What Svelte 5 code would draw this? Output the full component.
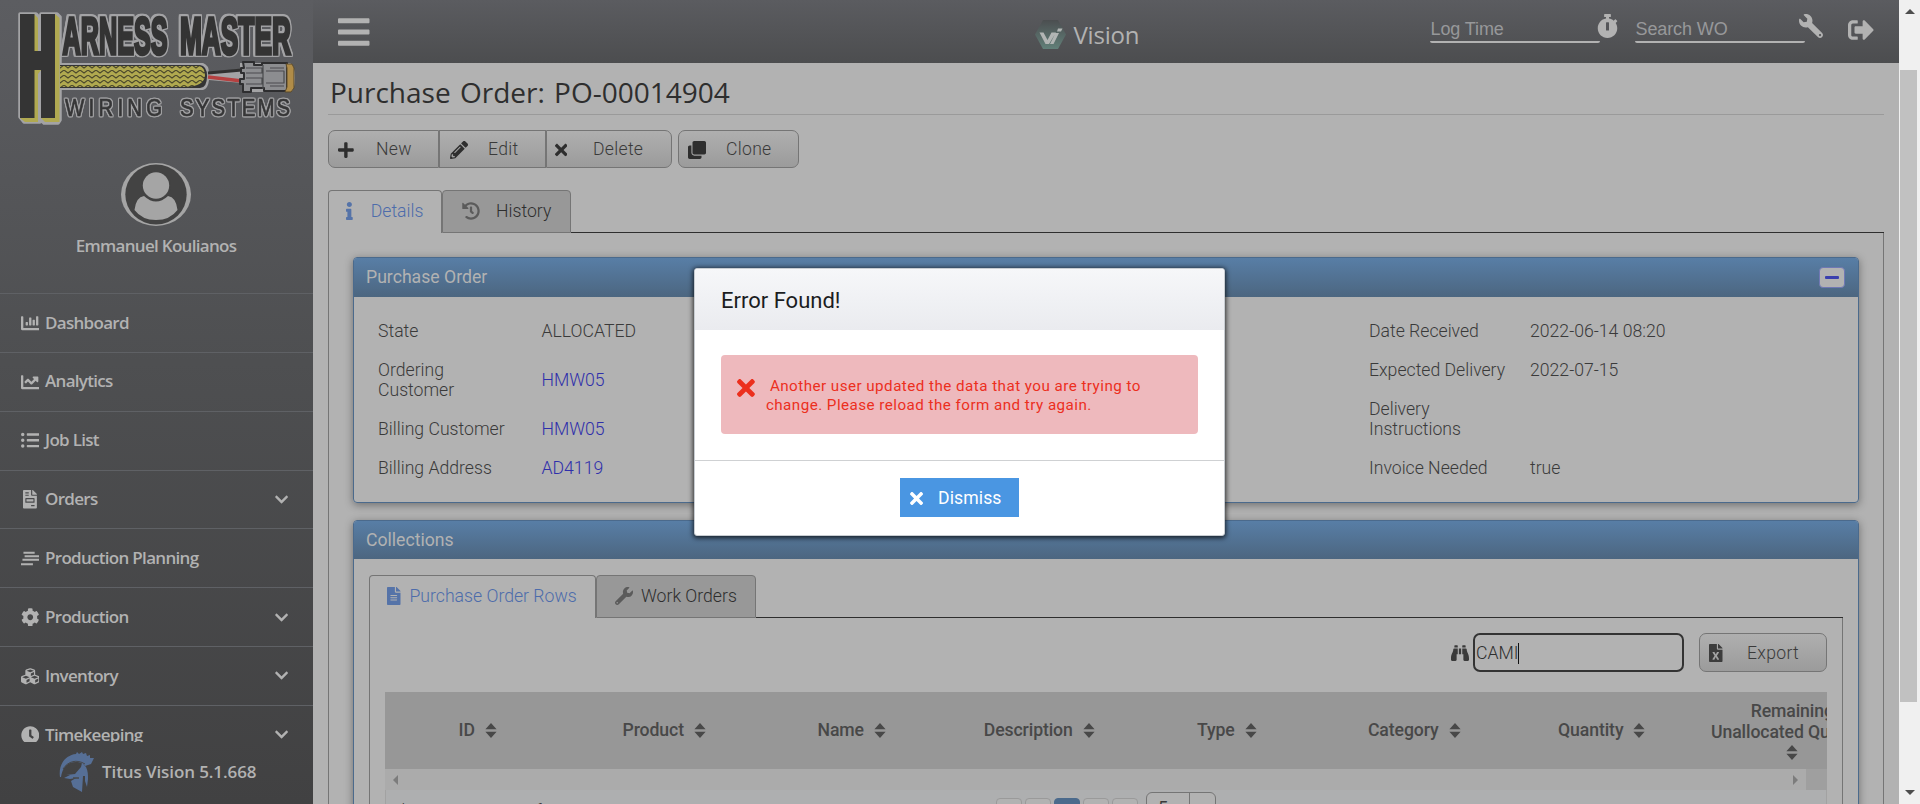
<script>
  const icons = {
    bars: [448, 'M16 132h416c8.8 0 16-7.2 16-16V76c0-8.800-7.200-16-16-16H16C7.200 60 0 67.200 0 76v40c0 8.800 7.200 16 16 16zm0 160h416c8.800 0 16-7.200 16-16v-40c0-8.800-7.200-16-16-16H16c-8.800 0-16 7.200-16 16v40c0 8.800 7.200 16 16 16zm0 160h416c8.800 0 16-7.200 16-16v-40c0-8.800-7.200-16-16-16H16c-8.800 0-16 7.200-16 16v40c0 8.800 7.200 16 16 16z'],
    chartBar: [512, 'M332.8 320h38.4c6.400 0 12.800-6.400 12.800-12.800V172.800c0-6.400-6.400-12.800-12.800-12.800h-38.400c-6.400 0-12.800 6.400-12.800 12.800v134.400c0 6.400 6.400 12.800 12.800 12.800zm96 0h38.400c6.400 0 12.800-6.400 12.800-12.800V76.800c0-6.400-6.400-12.800-12.800-12.800h-38.400c-6.400 0-12.800 6.400-12.800 12.800v230.400c0 6.400 6.400 12.800 12.800 12.800zm-288 0h38.400c6.400 0 12.800-6.400 12.800-12.800v-70.400c0-6.400-6.400-12.800-12.800-12.800h-38.400c-6.400 0-12.800 6.400-12.800 12.800v70.400c0 6.400 6.400 12.800 12.800 12.800zm96 0h38.400c6.400 0 12.800-6.400 12.800-12.800V108.800c0-6.400-6.400-12.800-12.800-12.800h-38.400c-6.400 0-12.800 6.400-12.800 12.800v198.400c0 6.400 6.400 12.800 12.800 12.800zM496 384H64V80c0-8.840-7.160-16-16-16H16C7.160 64 0 71.160 0 80v336c0 17.670 14.330 32 32 32h464c8.840 0 16-7.160 16-16v-32c0-8.840-7.160-16-16-16z'],
    chartLine: [512, 'M496 384H64V80c0-8.840-7.160-16-16-16H16C7.160 64 0 71.160 0 80v336c0 17.670 14.330 32 32 32h464c8.840 0 16-7.160 16-16v-32c0-8.840-7.160-16-16-16zM464 96H345.940c-21.380 0-32.090 25.850-16.970 40.970l32.400 32.400L288 242.750l-73.370-73.370c-12.500-12.500-32.760-12.500-45.250 0l-68.690 68.690c-6.250 6.250-6.250 16.380 0 22.630l22.620 22.620c6.250 6.250 16.380 6.250 22.630 0L192 237.250l73.370 73.370c12.500 12.500 32.760 12.500 45.250 0l96-96 32.400 32.400c15.120 15.120 40.970 4.410 40.970-16.970V112c.010-8.840-7.150-16-15.990-16z'],
    list: [512, 'M48 48a48 48 0 1 0 0 96 48 48 0 0 0 0-96zm0 160a48 48 0 1 0 0 96 48 48 0 0 0 0-96zm0 160a48 48 0 1 0 0 96 48 48 0 0 0 0-96zM176 64h320c9 0 16 7 16 16v32c0 9-7 16-16 16H176c-9 0-16-7-16-16V80c0-9 7-16 16-16zm0 160h320c9 0 16 7 16 16v32c0 9-7 16-16 16H176c-9 0-16-7-16-16v-32c0-9 7-16 16-16zm0 160h320c9 0 16 7 16 16v32c0 9-7 16-16 16H176c-9 0-16-7-16-16v-32c0-9 7-16 16-16z'],
    invoice: [384, 'M288 256H96v64h192v-64zm89-151L279.100 7c-4.500-4.500-10.600-7-17-7H256v128h128v-6.100c0-6.300-2.500-12.400-7-16.900zm-153 31V0H24C10.700 0 0 10.700 0 24v464c0 13.300 10.700 24 24 24h336c13.300 0 24-10.700 24-24V160H248c-13.200 0-24-10.800-24-24zM64 72c0-4.420 3.580-8 8-8h80c4.420 0 8 3.580 8 8v16c0 4.420-3.580 8-8 8H72c-4.420 0-8-3.580-8-8V72zm0 64c0-4.420 3.580-8 8-8h80c4.420 0 8 3.580 8 8v16c0 4.420-3.580 8-8 8H72c-4.420 0-8-3.580-8-8v-16zm256 304c0 4.420-3.580 8-8 8h-80c-4.420 0-8-3.580-8-8v-16c0-4.420 3.580-8 8-8h80c4.420 0 8 3.580 8 8v16zm0-200v96c0 8.840-7.160 16-16 16H80c-8.840 0-16-7.160-16-16v-96c0-8.840 7.160-16 16-16h224c8.840 0 16 7.160 16 16z'],
    planning: [512, 'M68 76h310v56H68zM100 172h400v56H100zM40 268h472v56H40zM0 392h330v56H0z'],
    cog: [512, 'M487.400 315.700l-42.600-24.600c4.300-23.200 4.300-47 0-70.200l42.600-24.600c4.900-2.800 7.100-8.600 5.500-14-11.100-35.600-30-67.800-54.700-94.600-3.800-4.100-10-5.100-14.800-2.300L380.800 110c-17.900-15.400-38.500-27.300-60.800-35.100V25.800c0-5.600-3.900-10.500-9.400-11.700-36.700-8.200-74.300-7.800-109.200 0-5.500 1.200-9.400 6.100-9.400 11.700V75c-22.200 7.900-42.800 19.800-60.800 35.100L88.700 85.500c-4.900-2.800-11-1.900-14.800 2.300-24.700 26.700-43.600 58.900-54.700 94.600-1.700 5.400.6 11.200 5.500 14L67.300 221c-4.300 23.200-4.300 47 0 70.200l-42.600 24.600c-4.900 2.800-7.100 8.600-5.500 14 11.100 35.600 30 67.800 54.700 94.600 3.800 4.100 10 5.100 14.800 2.300l42.600-24.600c17.900 15.400 38.500 27.300 60.800 35.100v49.200c0 5.600 3.900 10.500 9.400 11.700 36.700 8.200 74.300 7.800 109.200 0 5.500-1.200 9.400-6.100 9.400-11.700v-49.200c22.200-7.900 42.800-19.800 60.800-35.100l42.600 24.600c4.900 2.800 11 1.900 14.800-2.300 24.700-26.700 43.600-58.900 54.700-94.600 1.500-5.500-.7-11.300-5.600-14.100zM256 336c-44.100 0-80-35.900-80-80s35.900-80 80-80 80 35.900 80 80-35.900 80-80 80z'],
    cubes: [512, 'M488.600 250.200L392 214V105.500c0-15-9.300-28.400-23.400-33.700l-100-37.500c-8.100-3.100-17.100-3.100-25.300 0l-100 37.500c-14.100 5.300-23.400 18.700-23.400 33.700V214l-96.600 36.200C9.300 255.500 0 268.900 0 283.900V394c0 13.600 7.700 26.100 19.900 32.200l100 50c10.100 5.100 22.100 5.100 32.200 0l103.900-52 103.900 52c10.100 5.100 22.100 5.100 32.200 0l100-50c12.200-6.100 19.900-18.600 19.900-32.200V283.900c0-15-9.300-28.400-23.400-33.700zM358 214.800l-85 31.900v-68.200l85-37v73.300zM154 104.100l102-38.200 102 38.200v.6l-102 41.400-102-41.400v-.6zm84 291.100l-85 42.500v-79.100l85-38.800v75.400zm0-112l-102 41.400-102-41.400v-.6l102-38.200 102 38.200v.6zm240 112l-85 42.500v-79.100l85-38.800v75.400zm0-112l-102 41.400-102-41.400v-.6l102-38.200 102 38.200v.6z'],
    clock: [512, 'M256 8C119 8 8 119 8 256s111 248 248 248 248-111 248-248S393 8 256 8zm92.490 313l-20 25a16 16 0 0 1-22.490 2.500l-67-49.720a40 40 0 0 1-15-31.230V112a16 16 0 0 1 16-16h32a16 16 0 0 1 16 16v144l58 42.500a16 16 0 0 1 2.490 22.500z'],
    chevron: [448, 'M207.030 381.480L12.690 187.130c-9.370-9.370-9.370-24.570 0-33.940l22.670-22.670c9.360-9.360 24.520-9.380 33.900-.04L224 284.500l154.750-154.020c9.380-9.340 24.540-9.320 33.900.04l22.670 22.670c9.370 9.370 9.370 24.570 0 33.940L240.970 381.480c-9.370 9.370-24.570 9.370-33.940 0z'],
    plus: [448, 'M416 208H272V64c0-17.670-14.330-32-32-32h-32c-17.670 0-32 14.330-32 32v144H32c-17.670 0-32 14.330-32 32v32c0 17.670 14.330 32 32 32h144v144c0 17.670 14.330 32 32 32h32c17.670 0 32-14.330 32-32V304h144c17.670 0 32-14.330 32-32v-32c0-17.670-14.330-32-32-32z'],
    pencil: [512, 'M497.900 142.100l-46.100 46.100c-4.700 4.700-12.300 4.700-17 0l-111-111c-4.700-4.700-4.700-12.300 0-17l46.100-46.100c18.700-18.700 49.100-18.700 67.900 0l60.100 60.100c18.800 18.700 18.800 49.100 0 67.900zM284.200 99.800L21.600 362.400.4 483.900c-2.900 16.400 11.400 30.600 27.800 27.800l121.500-21.300 262.600-262.600c4.700-4.700 4.700-12.300 0-17l-111-111c-4.800-4.700-12.400-4.700-17.100 0zM124.100 339.900c-5.500-5.500-5.500-14.300 0-19.800l154-154c5.500-5.500 14.300-5.500 19.800 0s5.500 14.300 0 19.800l-154 154c-5.500 5.500-14.300 5.500-19.800 0zM88 424h48v36.300l-64.500 11.300-31.100-31.100L51.700 376H88v48z'],
    times: [352, 'M242.720 256l100.070-100.070c12.280-12.280 12.280-32.190 0-44.480l-22.240-22.240c-12.280-12.280-32.190-12.280-44.480 0L176 189.280 75.930 89.210c-12.280-12.280-32.190-12.280-44.480 0L9.210 111.450c-12.280 12.280-12.280 32.190 0 44.480L109.280 256 9.210 356.070c-12.280 12.280-12.280 32.190 0 44.480l22.240 22.240c12.280 12.280 32.200 12.280 44.480 0L176 322.720l100.070 100.070c12.280 12.280 32.200 12.280 44.480 0l22.240-22.240c12.280-12.280 12.280-32.190 0-44.480L242.720 256z'],
    clone: [512, 'M464 0c26.500 0 48 21.500 48 48v288c0 26.500-21.500 48-48 48H176c-26.500 0-48-21.500-48-48V48c0-26.500 21.500-48 48-48h288M176 416c-44.100 0-80-35.900-80-80V128H48c-26.500 0-48 21.500-48 48v288c0 26.500 21.500 48 48 48h288c26.500 0 48-21.500 48-48v-48H176z'],
    info: [192, 'M20 424.230h20V279.770H20c-11 0-20-9-20-20V212c0-11 9-20 20-20h112c11 0 20 9 20 20v212.230h20c11 0 20 9 20 20V492c0 11-9 20-20 20H20c-11 0-20-9-20-20v-47.770c0-11 9-20 20-20zM96 0C56.200 0 24 32.200 24 72s32.200 72 72 72 72-32.200 72-72S135.800 0 96 0z'],
    history: [512, 'M504 255.530c.250 136.640-111.180 248.370-247.820 248.470-59.010.040-113.220-20.530-155.820-54.910-11.080-8.940-11.910-25.540-1.840-35.610l11.270-11.270c8.610-8.610 22.350-9.550 31.890-1.980C173.060 425.140 212.780 440 256 440c101.700 0 184-82.310 184-184 0-101.700-82.310-184-184-184-48.810 0-93.150 18.970-126.070 49.930l50.750 50.750c10.080 10.080 2.940 27.310-11.310 27.310H24c-8.840 0-16-7.160-16-16V38.630c0-14.250 17.230-21.390 27.310-11.310l49.370 49.370C129.210 34.140 189.550 8 256 8c136.810 0 247.750 110.780 248 247.530zm-180.910 78.790l9.820-12.630c8.140-10.460 6.250-25.540-4.210-33.680L288 256.350V152c0-13.250-10.750-24-24-24h-16c-13.250 0-24 10.750-24 24v135.650l65.410 50.870c10.460 8.140 25.540 6.260 33.680-4.200z'],
    fileAlt: [384, 'M224 136V0H24C10.700 0 0 10.700 0 24v464c0 13.300 10.700 24 24 24h336c13.300 0 24-10.700 24-24V160H248c-13.200 0-24-10.800-24-24zm64 236c0 6.600-5.400 12-12 12H108c-6.600 0-12-5.400-12-12v-8c0-6.600 5.400-12 12-12h168c6.600 0 12 5.400 12 12v8zm0-64c0 6.600-5.400 12-12 12H108c-6.600 0-12-5.400-12-12v-8c0-6.600 5.400-12 12-12h168c6.600 0 12 5.400 12 12v8zm0-72v8c0 6.600-5.400 12-12 12H108c-6.600 0-12-5.400-12-12v-8c0-6.600 5.400-12 12-12h168c6.600 0 12 5.400 12 12zm96-114.100v6.100H256V0h6.100c6.400 0 12.500 2.500 17 7l97.900 98c4.500 4.500 7 10.600 7 16.900z'],
    wrench: [512, 'M507.730 109.100c-2.240-9.030-13.540-12.090-20.120-5.510l-74.360 74.360-67.880-11.310-11.310-67.880 74.360-74.360c6.620-6.620 3.430-17.900-5.660-20.160-47.380-11.740-99.550.910-136.580 37.930-39.640 39.640-50.550 97.100-34.050 147.200L18.740 402.760c-24.990 24.990-24.990 65.510 0 90.500 24.990 24.990 65.510 24.990 90.500 0l213.210-213.210c50.120 16.710 107.470 5.680 147.370-34.220 37.070-37.070 49.700-89.320 37.910-136.730zM64 472c-13.250 0-24-10.750-24-24 0-13.260 10.750-24 24-24s24 10.740 24 24c0 13.250-10.750 24-24 24z'],
    stopwatch: [448, 'M432 304c0 114.900-93.100 208-208 208S16 418.900 16 304c0-104 76.300-190.200 176-205.500V64h-28c-6.600 0-12-5.400-12-12V12c0-6.600 5.400-12 12-12h120c6.600 0 12 5.400 12 12v40c0 6.600-5.400 12-12 12h-28v34.500c37.500 5.800 71.700 21.600 99.700 44.600l27.500-27.500c4.700-4.700 12.300-4.700 17 0l28.300 28.300c4.700 4.700 4.700 12.300 0 17l-29.400 29.400-.6.6C419.700 223.300 432 262.200 432 304zm-176 36V188.500c0-6.600-5.400-12-12-12h-40c-6.600 0-12 5.400-12 12V340c0 6.600 5.400 12 12 12h40c6.600 0 12-5.400 12-12z'],
    signOut: [512, 'M497 273L329 441c-15 15-41 4.500-41-17v-96H152c-13.300 0-24-10.700-24-24v-96c0-13.300 10.700-24 24-24h136V88c0-21.400 25.900-32 41-17l168 168c9.300 9.400 9.300 24.600 0 34zM192 436v-40c0-6.600-5.400-12-12-12H96c-17.700 0-32-14.300-32-32V160c0-17.700 14.300-32 32-32h84c6.600 0 12-5.400 12-12V76c0-6.600-5.400-12-12-12H96c-53 0-96 43-96 96v192c0 53 43 96 96 96h84c6.600 0 12-5.400 12-12z'],
    binoculars: [512, 'M416 48c0-8.840-7.160-16-16-16h-64c-8.840 0-16 7.160-16 16v48h96V48zM63.910 159.990C61.400 253.840 3.460 274.220 0 404v44c0 17.670 14.330 32 32 32h96c17.670 0 32-14.330 32-32V288h32V128H95.840c-17.630 0-31.450 14.370-31.930 31.990zm384.180 0c-.480-17.620-14.300-31.990-31.930-31.990H320v160h32v160c0 17.670 14.330 32 32 32h96c17.670 0 32-14.330 32-32v-44c-3.460-129.780-61.400-150.160-63.910-244.010zM176 32h-64c-8.840 0-16 7.160-16 16v48h96V48c0-8.840-7.160-16-16-16zm48 256h64V128h-64v160z'],
    excel: [384, 'M224 136V0H24C10.700 0 0 10.700 0 24v464c0 13.300 10.700 24 24 24h336c13.300 0 24-10.700 24-24V160H248c-13.200 0-24-10.800-24-24zm60.100 106.500L224 336l60.100 93.500c5.100 8-.6 18.500-10.100 18.500h-34.900c-4.400 0-8.500-2.400-10.600-6.300C208.900 405.500 192 373 192 373c-6.400 14.800-10 20-36.600 68.800-2.100 3.900-6.100 6.300-10.500 6.300H110c-9.500 0-15.200-10.500-10.100-18.500l60.300-93.500-60.300-93.500c-5.200-8 .6-18.500 10.100-18.500h34.800c4.400 0 8.500 2.400 10.600 6.300 26.100 48.800 20 33.600 36.600 68.500 0 0 6.100-11.700 36.600-68.500 2.100-3.900 6.200-6.300 10.600-6.300H274c9.500-.1 15.200 10.400 10.100 18.400zM384 121.900v6.100H256V0h6.100c6.400 0 12.500 2.500 17 7l97.900 98c4.500 4.500 7 10.600 7 16.900z']
  };

  const menu = [
    ['chartBar', 'Dashboard', false],
    ['chartLine', 'Analytics', false],
    ['list', 'Job List', false],
    ['invoice', 'Orders', true],
    ['planning', 'Production Planning', false],
    ['cog', 'Production', true],
    ['cubes', 'Inventory', true],
    ['clock', 'Timekeeping', true]
  ];
  const left = [
    ['State', 'ALLOCATED', false],
    ['Ordering Customer', 'HMW05', true],
    ['Billing Customer', 'HMW05', true],
    ['Billing Address', 'AD4119', true]
  ];
  const right = [
    ['Date Received', '2022-06-14 08:20'],
    ['Expected Delivery', '2022-07-15'],
    ['Delivery Instructions', ''],
    ['Invoice Needed', 'true']
  ];
  const columns = ['ID', 'Product', 'Name', 'Description', 'Type', 'Category', 'Quantity'];
</script>

{#snippet icon(name, size)}
  <svg class="ic" width={(icons[name][0] / 512) * size} height={size} viewBox="0 0 {icons[name][0]} 512" fill="currentColor"><path d={icons[name][1]} /></svg>
{/snippet}

{#snippet sort()}
  <svg class="sort" width="12" height="15" viewBox="0 0 12 15" fill="currentColor"><path d="M6 0l5.600 6.300H.4zM6 15L.4 8.700h11.200z" /></svg>
{/snippet}

<div class="shell">
  <aside>
    <svg class="logo" width="313" height="132" viewBox="0 0 313 132">
      <defs>
        <pattern id="braid" width="8" height="5" patternUnits="userSpaceOnUse">
          <rect width="8" height="5" fill="#b0a94f" />
          <path d="M0 0l4 3 4-3" stroke="#4b482c" stroke-width="1.100" fill="none" />
        </pattern>
      </defs>
      <g stroke-linejoin="round">
        <path d="M20 14H36L39 17V52H41V14H57L60 17V120L58 123H44L40 119V122H24L20 117Z" fill="#a3a3a5" stroke="#a3a3a5" stroke-width="3.500" />
        <path d="M34 14l4 4v33h-4zM34 70h7l-3 4v48H25l-5-4h14zM55 14l4.500 4v104H45l-4-4h14z" fill="#b0a951" />
        <path d="M20 14H34.500V51H41V14H55V118H41V70H34.500V118H20Z" fill="#343434" />
        <path d="M60 63H203Q209 65 209 73L240 69V63H290Q295 64 295 78Q295 91 290 92H242V83L209 80Q208 89 203 90H60Z" fill="#a3a3a5" />
        <path d="M60 65H200Q207 66 207 76Q207 88 200 88H60Z" fill="#343434" />
        <path d="M60 66H199Q205 67 205 76Q204 86 186 87H60Z" fill="url(#braid)" />
        <path d="M208 73L242 70" stroke="#303030" stroke-width="3" />
        <path d="M208 77L242 81" stroke="#b54040" stroke-width="3.500" />
        <path d="M243 62H254V65H262V63H287V91H264V88H251V92H243V84H240V79H244V73H241V68H244Z" fill="#8c8d90" stroke="#2e2e30" stroke-width="2" />
        <path d="M246 68h16v5h-16m0 5h16v6h-16M266 71h18v12h-18M263 65v24M270 68h14M270 86h14" stroke="#4a4b4e" stroke-width="1.200" fill="none" />
        <path d="M286 64h6l2 4v20l-3 4h-6l2-5V68z" fill="#b08c48" stroke="#5a4a2c" stroke-width="1" />
      </g>
      <g class="brand-big">
        <text transform="translate(62.500 54) scale(.485 1)">ARNESS</text>
        <text transform="translate(180 54) scale(.505 1)">MASTER</text>
      </g>
      <g class="brand-small">
        <text transform="translate(65 116) scale(.85 1)">WIRING</text>
        <text transform="translate(180 116) scale(.85 1)" class="sys">SYSTEMS</text>
      </g>
    </svg>
    <div class="user">
      <svg width="70" height="63" viewBox="0 0 70 63">
        <ellipse cx="35" cy="31.500" rx="35" ry="31.500" fill="#a5a5a5" />
        <ellipse cx="35" cy="31.500" rx="30.700" ry="30" fill="#434343" />
        <path d="M23 33Q15 34 13.500 47Q21 57 35 57Q49 57 56.500 47Q55 34 47 33Q35 44 23 33Z" fill="#a5a5a5" />
        <circle cx="35" cy="22.500" r="15" fill="#434343" />
        <circle cx="35" cy="22.500" r="13.200" fill="#a5a5a5" />
      </svg>
      <span>Emmanuel Koulianos</span>
    </div>
    <nav>
      {#each menu as [ic, label, more]}
        <a href="#menu"><span class="mi">{@render icon(ic, 18.5)}</span><span class="ml">{label}</span>{#if more}<span class="mc">{@render icon('chevron', 15)}</span>{/if}</a>
      {/each}
    </nav>
    <footer>
      <svg width="36" height="41" viewBox="0 0 36 41" fill="#566f96">
        <path d="M1 25C-1 12 7 3 17 2l1-2 2 2 3-2 1 2 3-1 1 3 3-1 0 3 4 0-3 6-6 2c-3-4-9-5-15-3C6 13 3 18 2 25z" />
        <path d="M4 17C9 9 18 7 26 12" stroke="#47484a" stroke-width="1" fill="none" />
        <path d="M5 26l6-3-4 0 9-1 6-7 1-4 4 4c2 4 2 8 2 12l-1 8-2-6v-5l-2 0-1 16-9-5-2-6 5-3-6 1z" />
        <path d="M14 26l6 0" stroke="#47484a" stroke-width="1.500" />
      </svg>
      <span>Titus Vision 5.1.668</span>
    </footer>
  </aside>

  <main>
    <header>
      <span class="burger">{@render icon('bars', 36)}</span>
      <div class="brand">
        <svg width="31" height="29" viewBox="0 0 31 29">
          <defs><linearGradient id="hex" x2="0" y2="1"><stop offset="0" stop-color="#4b4e50" /><stop offset="1" stop-color="#628079" /></linearGradient></defs>
          <path d="M8 0H23L31 14.500L23 29H8L0 14.500Z" fill="url(#hex)" />
          <path d="M4.500 12.500h4l4 7.500 4-7.500h4.500l-7 11.500h-3.500zM20.500 13h3.500l-5.500 11h-3.500zM23 8.500h4.500l-1.500 3h-4z" fill="#b2b5b4" />
        </svg>
        <span>Vision</span>
      </div>
      <div class="tools">
        <span class="field">Log Time</span>
        <span class="t-watch">{@render icon('stopwatch', 24)}</span>
        <span class="field">Search WO</span>
        <span class="t-wrench">{@render icon('wrench', 24)}</span>
        <span class="t-out">{@render icon('signOut', 26)}</span>
      </div>
    </header>

    <div class="page">
      <h1>Purchase Order: PO-00014904</h1>
      <div class="actions">
        <button class="b-new"><span>{@render icon('plus', 18)}</span>New</button>
        <button class="b-edit"><span>{@render icon('pencil', 18)}</span>Edit</button>
        <button class="b-del"><span>{@render icon('times', 18)}</span>Delete</button>
        <button class="b-clone"><span>{@render icon('clone', 18)}</span>Clone</button>
      </div>

      <div class="tabs">
        <span class="tab on t-details">{@render icon('info', 18)}<b>Details</b></span>
        <span class="tab t-history">{@render icon('history', 18)}<b>History</b></span>
        <span class="rest"></span>
      </div>
      <div class="tabbody outer">
        <section class="panel p1">
          <div class="phead"><span>Purchase Order</span><span class="min"><i></i></span></div>
          <div class="pbody">
            <dl class="dl-left">
              {#each left as [k, v, link]}<dt>{k}</dt><dd class:link>{v}</dd>{/each}
            </dl>
            <dl class="dl-right">
              {#each right as [k, v]}<dt>{k}</dt><dd>{v}</dd>{/each}
            </dl>
          </div>
        </section>

        <section class="panel p2">
          <div class="phead"><span>Collections</span></div>
          <div class="inner">
            <div class="tabs">
              <span class="tab on t-rows">{@render icon('fileAlt', 18)}<b>Purchase Order Rows</b></span>
              <span class="tab t-work">{@render icon('wrench', 18)}<b>Work Orders</b></span>
              <span class="rest"></span>
            </div>
            <div class="tabbody">
              <div class="search">
                <span class="bino">{@render icon('binoculars', 18)}</span>
                <div class="input">CAMI<i></i></div>
                <button class="b-export"><span>{@render icon('excel', 18)}</span>Export</button>
              </div>
              <div class="thead">
                {#each columns as c}<div class="th"><span>{c}</span>{@render sort()}</div>{/each}
                <div class="th tall"><span>Remaining<br />Unallocated Quantity</span>{@render sort()}</div>
              </div>
              <div class="hscroll"><i class="la"></i><i class="ra"></i><i class="corner"></i></div>
              <div class="pager">
                <span class="count">Showing 0 to 0 of 0</span>
                <div class="pages"><i></i><i></i><i class="cur"></i><i></i><i></i></div>
                <div class="size"><span>5</span></div>
              </div>
            </div>
          </div>
        </section>
      </div>
    </div>
  </main>

  <div class="vscroll"><i class="up"></i><i class="thumb"></i><i class="down"></i></div>

  <div class="modal">
    <div class="mhead">Error Found!</div>
    <div class="mbody">
      <div class="alert">{@render icon('times', 26)}<p>Another user updated the data that you are trying to change. Please reload the form and try again.</p></div>
    </div>
    <div class="mfoot"><button class="dismiss">{@render icon('times', 19)}<span>Dismiss</span></button></div>
  </div>
</div>

<style>
  :global(body) { margin: 0; overflow: hidden; background: #b2b2b2; }
  .shell, .shell * { box-sizing: border-box; }
  .shell { position: relative; display: grid; grid-template-columns: 313px 1586px 21px; width: 1920px; height: 804px; overflow: hidden; font-family: Roboto, sans-serif; font-size: 17.650px; line-height: 20.600px; color: #3a3a3a; }
  .ic, .sort { display: block; flex: none; }

  aside { display: flex; flex-direction: column; height: 804px; overflow: hidden; background: linear-gradient(#5c5d61, #4e4f51 45%, #414142); color: #b2b2b2; font-family: "Open Sans", sans-serif; font-weight: 600; font-size: 17px; letter-spacing: -.7px; }
  .logo { display: block; flex: none; letter-spacing: 0; }
  .brand-big { font: bold 52px "Liberation Sans", sans-serif; fill: #343434; stroke: #343434; stroke-width: 3.500px; filter: drop-shadow(1.200px 0 0 #a3a3a5) drop-shadow(-1.200px 0 0 #a3a3a5) drop-shadow(0 1.200px 0 #a3a3a5) drop-shadow(0 -1.200px 0 #a3a3a5); }
  .brand-small { font: 24px "Liberation Sans", sans-serif; letter-spacing: 5px; fill: #363637; stroke: #363637; stroke-width: .7px; filter: drop-shadow(1px 0 0 #a0a0a2) drop-shadow(-1px 0 0 #a0a0a2) drop-shadow(0 1px 0 #a0a0a2) drop-shadow(0 -1px 0 #a0a0a2); }
  .sys { letter-spacing: 2.500px; }
  .user { display: flex; flex-direction: column; align-items: center; height: 161px; padding: 31px 1px 0 0; flex: none; }
  .user span { margin-top: 10px; }
  nav { height: 449px; overflow: hidden; flex: none; }
  nav a { display: flex; align-items: center; height: 58.850px; padding-left: 20px; border-top: 1px solid #5f6165; color: inherit; text-decoration: none; }
  .mi { display: flex; justify-content: center; width: 20px; margin-right: 5px; }
  .mc { margin-left: auto; margin-right: 25px; }
  footer { display: flex; align-items: center; gap: 7px; height: 62px; padding: 0 0 1px 59px; letter-spacing: -.1px; }

  main { display: flex; flex-direction: column; height: 804px; overflow: hidden; background: #b2b2b2; }
  header { display: flex; align-items: flex-start; flex: none; height: 63px; background: linear-gradient(#5b5c60, #4c4d4f); color: #b2b2b2; }
  .burger { margin: 14px 0 0 25px; }
  .brand { display: flex; align-items: center; gap: 8px; margin: 19px 0 0 665px; height: 30px; font: 500 24px "Open Sans", sans-serif; letter-spacing: -.2px; width: 120px; }
  .tools { display: flex; align-items: flex-start; margin-left: 275px; }
  .field { display: block; width: 170px; height: 30px; margin-top: 13px; padding: 6px 0 0 1px; border-bottom: 2px solid #b2b2b2; border-radius: 2px; font: 18px/21px "Liberation Sans", Arial, sans-serif; letter-spacing: -.1px; color: #97989a; }
  .t-watch { margin: 14px 16px 0 -3px; width: 22px; }
  .t-wrench { margin: 14px 0 0 -6px; transform: scaleX(-1); }
  .t-out { margin: 17px 0 0 25px; }

  .page { padding: 0 15px; }
  h1 { margin: 0; height: 52px; padding: 9px 0 0 2px; border-bottom: 1px solid #9a9a9a; font: 400 28px/40px "Open Sans", sans-serif; word-spacing: 2px; color: #2e2e2e; }
  .actions { display: flex; padding-top: 15px; }
  button { display: flex; align-items: center; height: 38px; padding: 1px 0 0; border: 1px solid #757575; background: linear-gradient(#afafaf, #9b9b9b); color: #3a3a3a; font: 300 17.600px/21px Roboto, sans-serif; letter-spacing: .3px; }
  button span { display: block; color: #2e2e2e; }
  .b-new { width: 111px; padding-left: 9px; border-radius: 7px 0 0 7px; }
  .b-new span { width: 38px; }
  .b-edit { width: 107px; padding-left: 10px; }
  .b-edit span { width: 38px; }
  .b-del { width: 126px; padding-left: 8px; border-radius: 0 7px 7px 0; }
  .b-del span { width: 38px; }
  .b-clone { width: 121px; margin-left: 6px; padding-left: 9px; border-radius: 7px; }
  .b-clone span { width: 38px; }

  .tabs { display: flex; }
  .page > .tabs { margin-top: 22px; }
  .tab { display: flex; align-items: center; height: 43px; padding-bottom: 1px; border: 1px solid #757575; border-radius: 4px 4px 0 0; background: #989898; color: #2e2e2e; }
  .tab :global(svg) { color: #5b5b5b; }
  .tab b { font-weight: 300; }
  .tab.on { padding-bottom: 2px; background: #b2b2b2; border-bottom: 0; color: #4d6cab; }
  .tab.on :global(svg) { color: #5573a8; }
  .rest { flex: 1; border-bottom: 1px solid #2e2e2e; }
  .t-details { width: 114px; padding-left: 17px; gap: 18px; }
  .t-history { width: 129px; padding-left: 19px; gap: 16px; }
  .t-rows { width: 227px; padding-left: 17px; gap: 9px; }
  .t-work { width: 160px; padding-left: 18px; gap: 8px; }
  .tabbody { border: 1px solid #757575; border-width: 0 1px; }
  .outer { padding: 24px 24px 0; height: 700px; }

  .panel { border: 1px solid #4b6a8c; border-radius: 4px; box-shadow: 0 2px 9px rgba(0, 0, 0, .38); overflow: hidden; }
  .phead { display: flex; align-items: center; justify-content: space-between; height: 39px; padding: 0 13px 1px 12px; background: linear-gradient(#587ea6, #4c6680); color: #b2b2b2; font-weight: 400; }
  .min { display: flex; align-items: center; justify-content: center; width: 26px; height: 21px; background: #b2b2b2; border: 1px solid #7078b4; border-radius: 4px; }
  .min i { width: 14px; height: 3px; background: #3a3fae; border-radius: 1px; }
  .p1 { height: 246px; }
  .pbody { display: flex; padding: 14.600px 0 0 24px; }
  dl { display: grid; margin: 0; align-content: start; align-items: center; font-weight: 300; }
  dt, dd { margin: 0; padding: 9px 0; min-height: 39px; }
  .dl-left { grid-template-columns: 163.500px 400px; width: 991px; }
  .dl-right { grid-template-columns: 161px 250px; }
  .dl-left dt, .dl-right dt { max-width: 140px; }
  .link { color: #2f2fab; }
  .p2 { margin-top: 17px; height: 400px; }
  .p2 .phead { height: 38px; padding-bottom: 0; }
  .inner { padding: 16px 15px 0; }
  .search { display: flex; align-items: center; justify-content: flex-end; padding: 15px 15px 20px 0; }
  .bino { margin-right: 4px; }
  .input { display: flex; align-items: center; width: 211px; height: 39px; padding: 1px 0 0 1px; border: 2px solid #333; border-radius: 7px; font-weight: 300; color: #2e2e2e; }
  .input i { width: 1px; height: 21px; background: #111; }
  .b-export { width: 128px; height: 39px; margin-left: 15px; padding-left: 9px; border-radius: 7px; }
  .b-export span { width: 38px; color: #3c3c3c; }
  .thead { display: flex; height: 77px; margin: 0 15px; overflow: hidden; background: #979797; font-weight: 500; color: #484848; }
  .th { display: flex; flex: none; width: 187.500px; align-items: center; justify-content: center; gap: 10px; text-align: center; letter-spacing: -.1px; }
  .th:first-child { width: 185.500px; }
  .tall { flex-direction: column; gap: 2px; padding-left: 6px; line-height: 21px; white-space: nowrap; }
  .hscroll { display: flex; align-items: center; height: 21px; margin: 0 15px; background: #ababab; }
  .la { margin-left: 8px; border: 5px solid transparent; border-right-color: #7c7c7c; border-left: 0; }
  .ra { margin-left: auto; border: 5px solid transparent; border-left-color: #7c7c7c; border-right: 0; }
  .corner { width: 21px; height: 21px; margin-left: 8px; background: #9f9f9f; }
  .pager { display: flex; align-items: flex-start; height: 50px; margin: 0 15px; border: 1px solid #a2a2a2; border-width: 0 1px; background: #aeafb0; }
  .count { width: 610px; padding: 11px 0 0 5px; font-weight: 300; word-spacing: 4px; }
  .pages { display: flex; gap: 3px; margin-top: 8px; }
  .pages i { width: 26px; height: 30px; border: 1px solid #9a9a9a; border-radius: 4px; background: #b2b2b2; }
  .pages .cur { background: #4b6a8c; border-color: #4b6a8c; }
  .size { display: flex; width: 70px; height: 38px; margin: 2px 0 0 8px; border: 1px solid #757575; border-radius: 6px; background: #b2b2b2; }
  .size span { width: 43px; padding: 5px 0 0 11px; border-right: 1px solid #757575; font-weight: 400; }

  .vscroll { display: flex; flex-direction: column; align-items: center; background: #f0f0f0; }
  .vscroll i { flex: none; }
  .up { margin-top: 9px; border: 5px solid transparent; border-bottom-color: #4d4d4d; border-top: 0; }
  .thumb { width: 17px; height: 632px; margin: 56px 2px 0 0; background: #c1c1c1; }
  .down { margin-top: 88px; border: 5px solid transparent; border-top-color: #4d4d4d; border-bottom: 0; }

  .modal { position: absolute; left: 694px; top: 268px; width: 531px; height: 268px; border: 1px solid #c8cdd2; border-radius: 3px; background: #fff; box-shadow: 0 1px 5px 1px rgba(0, 0, 0, .75); overflow: hidden; color: #1b1d1f; }
  .mhead { height: 61px; padding: 20px 0 0 26px; background: linear-gradient(#f6f7f9, #eaebef); font-size: 22px; line-height: 24px; }
  .mbody { height: 131px; padding: 25px 26px 0; border-bottom: 1px solid #cfd1d3; }
  .alert { display: flex; height: 79px; padding: 20px 16px 0 16px; border-radius: 4px; background: #eeb9bd; color: #ec2f1d; }
  .alert p { flex: 1; margin: 2px 20px 0 11px; text-indent: 4px; font-size: 15.200px; line-height: 19px; letter-spacing: .46px; }
  .mfoot { display: flex; justify-content: center; padding-top: 17px; }
  .dismiss { width: 119px; height: 39px; padding: 2px 0 0 10px; border: 0; background: #4a96e2; color: #fff; font-weight: 400; letter-spacing: .1px; }
  .dismiss span { color: #fff; margin-left: 15px; }
</style>
